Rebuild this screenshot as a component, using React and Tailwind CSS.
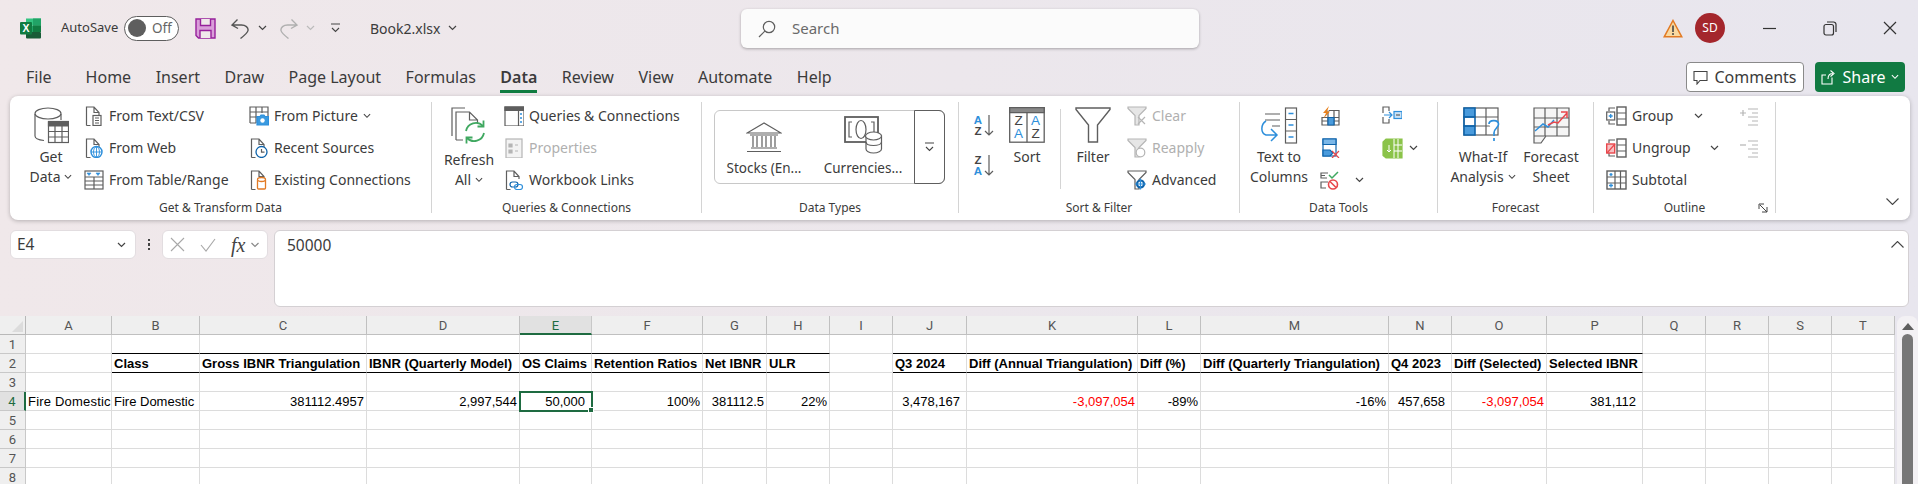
const GR = '#5e5e5e'
const LG = '#b5b5b5'
const BL = '#2e8fdb'
const DB = '#0f64ab'

const Chev = ({ color = '#444', w = 9 }) => (
  <svg width={w} height="6" viewBox="0 0 9 6" fill="none" stroke={color} strokeWidth="1.2" className="shrink-0">
    <path d="M1 1l3.5 3.5L8 1" />
  </svg>
)

const I = ({ w = 20, h = 20, children }) => (
  <svg width={w} height={h} viewBox={`0 0 ${w} ${h}`} fill="none" stroke={GR} strokeWidth="1.2" className="shrink-0">
    {children}
  </svg>
)

const Doc = ({ color = GR }) => <path d="M2.5 19.5V1h7.5l5 5.5V9M10 1v5.5h5M2.5 19.5h4" stroke={color} />

/* title bar */
const ExcelLogo = () => (
  <svg width="21" height="21" viewBox="0 0 21 21" className="shrink-0">
    <rect x="6" y="0.5" width="15" height="7" fill="#33c481" />
    <rect x="13" y="0.5" width="8" height="7" fill="#21a366" />
    <rect x="6" y="7.5" width="15" height="6.5" fill="#21a366" />
    <rect x="6" y="14" width="15" height="6.5" rx="1" fill="#185c37" />
    <rect x="13" y="7.5" width="8" height="6.5" fill="#107c41" />
    <rect x="0" y="4" width="12" height="12.5" rx="1" fill="#107c41" />
    <text x="6" y="14" textAnchor="middle" fontSize="10.5" fontWeight="700" fontFamily="Liberation Sans" fill="#fff">X</text>
  </svg>
)

const SaveIcon = () => (
  <svg width="21" height="21" viewBox="0 0 21 21" className="shrink-0" fill="#d99ed9" stroke="#96209b" strokeWidth="1.4">
    <path d="M1 1h19v19H3.5L1 17.5z" />
    <path d="M5.5 1v6.5h10V1" fill="#f0e8ea" />
    <path d="M5 20v-7.5h11V20" fill="#f0e8ea" />
  </svg>
)

const UndoIcon = ({ color }) => (
  <svg width="21" height="21" viewBox="0 0 21 21" fill="none" stroke={color} strokeWidth="1.4" className="shrink-0">
    <path d="M7.5 1.5L2 7l6 3.5M2.5 7h9c4 0 7 2.5 6.5 5.5-.3 2-3 4.5-7.5 8" />
  </svg>
)

const TitleBar = () => (
  <div className="h-[56px] flex items-center text-[#3b3b3b] relative">
    <div className="ml-[20px]"><ExcelLogo /></div>
    <span className="ml-[20px] text-[13px] w-[63px]">AutoSave</span>
    <div className="w-[55px] h-[25px] rounded-full border border-[#5e5e5e] bg-white flex items-center pl-[3px] gap-[6px]">
      <div className="w-[18px] h-[18px] rounded-full bg-[#5e5e5e]" />
      <span className="text-[13.5px] text-[#666]">Off</span>
    </div>
    <div className="ml-[16px]"><SaveIcon /></div>
    <div className="ml-[14px]"><UndoIcon color="#555" /></div>
    <div className="ml-[7px]"><Chev /></div>
    <div className="ml-[11px] scale-x-[-1]"><UndoIcon color="#b0b0b0" /></div>
    <div className="ml-[7px]"><Chev color="#bbb" /></div>
    <svg width="11" height="10" viewBox="0 0 11 10" fill="none" stroke="#444" strokeWidth="1.1" className="ml-[15px]">
      <path d="M1 1h9M2 5l3.5 3.5L9 5" />
    </svg>
    <span className="ml-[29px] text-[14px]">Book2.xlsx</span>
    <div className="ml-[7px]"><Chev w={11} /></div>

    <div className="absolute left-[741px] top-[9px] w-[458px] h-[39px] bg-[#fbfbfb] rounded-md shadow-[0_1px_3px_rgba(0,0,0,0.3)] flex items-center pl-[17px]">
      <svg width="18" height="18" viewBox="0 0 18 18" fill="none" stroke="#5e5e5e" strokeWidth="1.2">
        <circle cx="11" cy="7" r="5.7" />
        <path d="M6.8 11.2L1 17" />
      </svg>
      <span className="ml-[16px] text-[15px] text-[#6a6a6a]">Search</span>
    </div>

    <div className="ml-auto flex items-center">
      <svg width="20" height="19" viewBox="0 0 20 19" className="shrink-0">
        <path d="M10 1.5L18.8 17.8H1.2z" fill="#f9d9a0" stroke="#e27a24" strokeWidth="1.5" />
        <path d="M10 6.5v6.5" stroke="#444" strokeWidth="1.6" />
        <circle cx="10" cy="15" r="1" fill="#444" />
      </svg>
      <div className="ml-[12px] w-[30px] h-[30px] rounded-full bg-[#a4262c] text-white text-[12px] flex items-center justify-center">SD</div>
      <svg width="13" height="13" viewBox="0 0 13 13" stroke="#333" strokeWidth="1.2" className="ml-[38px]">
        <path d="M0 6.5h13" />
      </svg>
      <svg width="14" height="15" viewBox="0 0 14 15" fill="none" stroke="#333" strokeWidth="1.2" className="ml-[47px]">
        <rect x="1" y="3.5" width="9.5" height="10.5" rx="2" />
        <path d="M4 1h6.5a2.5 2.5 0 0 1 2.5 2.5V11" />
      </svg>
      <svg width="14" height="14" viewBox="0 0 14 14" stroke="#333" strokeWidth="1.2" className="ml-[46px] mr-[21px]">
        <path d="M1 1l12 12M13 1L1 13" />
      </svg>
    </div>
  </div>
)

/* tabs */
const tabs = ['Home', 'Insert', 'Draw', 'Page Layout', 'Formulas', 'Data', 'Review', 'View', 'Automate', 'Help']

const TabRow = () => (
  <div className="h-[40px] flex items-start pt-[6px] pl-[26px] text-[#3b3b3b]">
    <span className="text-[16px] h-[31px] leading-[31px] mr-[34px]">File</span>
    <div className="flex gap-[24.5px]">
      {tabs.map((t) => (
        <span
          key={t}
          className={
            t === 'Data'
              ? 'text-[16px] h-[31px] leading-[31px] font-semibold border-b-[3px] border-[#107c41] box-border'
              : 'text-[16px] h-[31px] leading-[31px]'
          }
        >
          {t}
        </span>
      ))}
    </div>
    <div className="ml-auto flex gap-[11px] mr-[13px]">
      <div className="w-[118px] h-[30px] bg-white border border-[#8a8a8a] rounded flex items-center justify-center gap-[6px] text-[16px]">
        <svg width="15" height="15" viewBox="0 0 15 15" fill="none" stroke="#444" strokeWidth="1.1">
          <path d="M1 1.5h13v9H7L4 14v-3.5H1z" />
        </svg>
        Comments
      </div>
      <div className="w-[90px] h-[30px] bg-[#117a42] rounded text-white flex items-center justify-center gap-[6px] text-[16px]">
        <svg width="16" height="16" viewBox="0 0 16 16" fill="none" stroke="#fff" strokeWidth="1.1">
          <path d="M11 8.5V15H1V6h4M7 10c0-4 2-5.5 5-5.5M9.5 1.5l3.5 3-3.5 3" />
        </svg>
        Share
        <Chev color="#fff" w={8} />
      </div>
    </div>
  </div>
)

/* ribbon icons */
const Db = () => (
  <I w={35} h={37}>
    <path d="M1 7v22c0 2.5 4 4 9 4.5M27 7v6" />
    <ellipse cx="14" cy="6.5" rx="13" ry="5.5" />
    <rect x="14.5" y="14.5" width="20" height="21" fill="#fff" />
    <path d="M14.5 15h20v4h-20z" fill={GR} />
    <path d="M21 19v16M28 19v16M15 24.5h19M15 30h19" />
  </I>
)
const FromText = () => (
  <I>
    <Doc />
    <rect x="9" y="9.5" width="8" height="10" fill="#fff" />
    <path d="M11 12h4M11 14.5h4M11 17h4" />
  </I>
)
const FromWeb = () => (
  <I>
    <Doc />
    <circle cx="12.5" cy="14" r="5.5" fill="#fff" stroke={BL} strokeWidth="1.4" />
    <path d="M7 14h11M12.5 8.5v11M9.5 14c0-3 1.5-5 3-5.5 1.5.5 3 2.5 3 5.5s-1.500 5-3 5.500c-1.500-.5-3-2.500-3-5.500z" stroke={BL} strokeWidth="0.9" />
  </I>
)
const FromTable = () => (
  <I>
    <rect x="1" y="1" width="18" height="18" fill="#fff" />
    <path d="M1 7h18M1 11h18M1 15h18M10 7v12" />
    <path d="M3 3h4L5 5.500zM12 3h4l-2 2.500z" fill={BL} stroke={BL} strokeWidth="0.6" />
  </I>
)
const FromPicture = () => (
  <I>
    <path d="M1 17V1h18v9M1 6h18M7 1v16M13 1v6M1 11h9M1 17h6" />
    <path d="M8 10.500h3l1-1.500h3l1 1.500h3.500V19H8z" fill="#3a9ae0" stroke={BL} />
    <circle cx="13.500" cy="14.500" r="2.200" fill="#fff" stroke="none" />
  </I>
)
const Recent = () => (
  <I>
    <Doc />
    <circle cx="12.500" cy="14" r="5.500" fill="#fff" stroke={DB} strokeWidth="1.300" />
    <path d="M12.500 11v3.200h3" stroke={GR} />
  </I>
)
const Existing = () => (
  <I>
    <Doc />
    <path d="M8.500 10v8a1 1 0 0 0 1 1h6a1 1 0 0 0 1-1v-8" fill="#fff" stroke="#e27a24" strokeWidth="1.300" />
    <ellipse cx="12.500" cy="9.500" rx="4" ry="2" fill="#fff" stroke="#e27a24" strokeWidth="1.300" />
  </I>
)
const RefreshIcon = () => (
  <I w={36} h={38}>
    <path d="M1 29V1h13" />
    <path d="M5 33V5h13.500l8 8v4M18.500 5v8h8M5 33h7" fill="#fff" />
    <path d="M15 24a10 10 0 0 1 17-5M33 26a10 10 0 0 1-17 5" stroke="#3fa860" strokeWidth="1.800" />
    <path d="M32.500 13.500v6h-6M15.500 36.500v-6h6" stroke="#3fa860" strokeWidth="1.800" />
  </I>
)
const QueriesIcon = () => (
  <I>
    <rect x="1" y="1" width="19" height="19" />
    <path d="M1 1h19v3.500H1z" fill={GR} />
    <path d="M14.500 4.500V20" />
    <path d="M17 7v2M17 11v2M17 15v2" stroke={BL} strokeWidth="1.500" />
  </I>
)
const PropsIcon = () => (
  <I>
    <rect x="2" y="1" width="16" height="19" stroke={LG} fill="#f3f3f3" />
    <path d="M5 6h3v3H5zM5 12h3v3H5z" fill={LG} stroke={LG} />
    <path d="M11 7h3M11 13h3" stroke={LG} />
  </I>
)
const LinksIcon = () => (
  <I>
    <Doc />
    <rect x="6" y="12" width="8" height="5" rx="2.500" fill="#fff" stroke={DB} strokeWidth="1.200" />
    <rect x="10.500" y="14.500" width="8" height="5" rx="2.500" fill="none" stroke={BL} strokeWidth="1.200" />
  </I>
)
const Bank = () => (
  <I w={36} h={31}>
    <path d="M18 1L1 11h34z" />
    <path d="M4 13h28M5 26h26M1 29.500h34" />
    <path d="M7 14v11M11 14v11M16 14v11M20 14v11M25 14v11M29 14v11" />
  </I>
)
const Money = () => (
  <I w={39} h={38}>
    <rect x="1" y="1" width="33" height="25" strokeWidth="1.800" />
    <path d="M8 6H5v15h3M27 6h3v15h-3" />
    <ellipse cx="17" cy="13.500" rx="5" ry="9" />
    <path d="M22 20v13c0 2 3 4 7.500 4s8-2 8-4V20z" fill="#fff" />
    <ellipse cx="29.500" cy="20" rx="8" ry="4" fill="#fff" />
    <path d="M22 26c0 2 3 3.500 7.500 3.500s8-1.500 8-3.500" />
  </I>
)
const SortLetters = ({ a, b }) => (
  <svg width="22" height="23" viewBox="0 0 22 23" className="shrink-0" fill="none" stroke={GR} strokeWidth="1.200">
    <text x="5" y="10" textAnchor="middle" fontSize="11.500" fontWeight="700" fontFamily="Liberation Sans" stroke="none" fill={a === 'A' ? BL : '#444'}>{a}</text>
    <text x="5" y="21" textAnchor="middle" fontSize="11.500" fontWeight="700" fontFamily="Liberation Sans" stroke="none" fill={b === 'A' ? BL : '#444'}>{b}</text>
    <path d="M16 1v20M12 17l4 4 4-4" />
  </svg>
)
const SortIcon = () => (
  <svg width="36" height="36" viewBox="0 0 36 36" className="shrink-0" fill="#fff" stroke={GR} strokeWidth="1.300">
    <rect x="0.700" y="0.700" width="34.500" height="34.500" />
    <path d="M0.700 0.700h34.500v5H0.700z" fill="#888" />
    <path d="M18 5.700v29.500" />
    <g fontSize="13.500" fontFamily="Liberation Sans" stroke="none" textAnchor="middle">
      <text x="9.500" y="18" fill="#444">Z</text>
      <text x="9.500" y="31" fill={BL}>A</text>
      <text x="26.500" y="18" fill={BL}>A</text>
      <text x="26.500" y="31" fill="#444">Z</text>
    </g>
  </svg>
)
const Funnel = () => (
  <I w={36} h={36}>
    <path d="M1 1h34v1.500L22.500 18v17h-9V18L1 2.500z" strokeWidth="1.400" />
  </I>
)
const SmallFunnel = ({ color, fill }) => (
  <path d="M1 1h18v1.500l-7 7V19H8V9.500l-7-7z" stroke={color} fill={fill} />
)
const ClearIcon = () => (
  <I>
    <SmallFunnel color={LG} fill="#e6e6e6" />
    <path d="M11 11l7 7M18 11l-7 7" stroke={LG} />
  </I>
)
const ReapplyIcon = () => (
  <I>
    <SmallFunnel color={LG} fill="#e6e6e6" />
    <circle cx="13.500" cy="14.500" r="4.300" stroke={LG} fill="#fff" />
  </I>
)
const AdvancedIcon = () => (
  <I>
    <path d="M1 1h18v1.500l-7 7V19H8V9.500l-7-7z" />
    <circle cx="13.500" cy="14" r="3.500" fill="#fff" stroke={DB} strokeWidth="2.200" />
    <path d="M13.500 8.500v11M8 14h11" stroke={BL} strokeWidth="1.200" />
  </I>
)
const TextColumns = () => (
  <I w={38} h={37}>
    <path d="M5 7h15M5 13h15M12 19h8" />
    <rect x="25.500" y="1" width="11" height="35" fill="#fff" />
    <path d="M25.500 12.500h11M25.500 24h11" />
    <path d="M28.500 6.500h5M28.500 18h5M28.500 30h5" stroke={BL} strokeWidth="1.500" />
    <path d="M6 14c-5 3-6 12 0 14h10M11 22l6 6-6 6" stroke={BL} strokeWidth="1.500" />
  </I>
)
const FlashFill = () => (
  <I>
    <path d="M9 4.500h10V19H2V11" />
    <path d="M14 4.500V19M8 4.500V19M2 11.500h17M2 15h17" stroke={GR} />
    <path d="M8 11.500h6V19H8z" fill="#4a9bdc" stroke={DB} />
    <path d="M9 0L3 7h3l-2.500 5.500L10 5.500H7z" fill="#e8821e" stroke="none" />
  </I>
)
const RemoveDup = () => (
  <I>
    <rect x="3" y="1" width="13" height="17" fill="#fff" stroke={DB} />
    <path d="M3 1h13v5.500H3z" fill="#7ab7e8" stroke={DB} />
    <path d="M3 12h7l3 3-3 3H3z" fill="#4a9bdc" stroke={DB} />
    <path d="M12 13l7 7M19 13l-7 7" stroke="#e8474c" />
  </I>
)
const Validation = () => (
  <I>
    <path d="M8 3H1v5h6M1 5.500h4M8 12H1v6h5" />
    <path d="M9 5l3 3 6-6" stroke="#3fa860" strokeWidth="1.500" />
    <circle cx="13" cy="14.500" r="4.500" stroke="#e8474c" strokeWidth="1.600" fill="#fff" />
    <path d="M10 11.500l6 6" stroke="#e8474c" strokeWidth="1.600" />
  </I>
)
const Consolidate = () => (
  <I>
    <path d="M7 5V1H1v6M1 11v6h6v-4" />
    <path d="M2 9h8M7 6l3 3-3 3" stroke={BL} />
    <rect x="12" y="5.500" width="8" height="7" stroke={BL} fill="#c9e2f6" />
    <path d="M14 9h4" stroke={GR} />
  </I>
)
const DataModel = () => (
  <I w={21} h={21}>
    <path d="M4 1h16v19H4l-3-2.500V4z" fill="#8bc34a" stroke="#8bc34a" />
    <path d="M12 1v19M16 1v19M12 7h8M12 13h8" stroke="#fff" strokeWidth="1" />
    <path d="M7 7v7M5 12l2 2 2-2" stroke="#fff" strokeWidth="1" />
  </I>
)
const WhatIf = () => (
  <I w={40} h={34}>
    <rect x="1" y="1" width="34" height="27" fill="#fff" />
    <path d="M1 1h11v9H1zM1 19h11v9H1z" fill="#4a9bdc" stroke={DB} strokeWidth="1.600" />
    <path d="M1 10h11v9H1z" stroke={DB} strokeWidth="1.600" />
    <path d="M12 10h23M12 19h23M23 1v27" />
    <path d="M26 17c0-4 9-5 9.500 0 .3 4-4.500 4-4.500 9v3M31 31v3" stroke={BL} strokeWidth="1.700" fill="#fff" />
  </I>
)
const ForecastIcon = () => (
  <I w={37} h={37}>
    <path d="M1 1h35v28H13l-5 7H1z" fill="#f5f5f5" />
    <path d="M1 11h35M1 20h35M12 1v28M24 1v28M1 29h12" />
    <path d="M2 24l8-7 5 3 6-7" stroke={BL} strokeWidth="1.500" />
    <path d="M15 18l6-3 4 1 9-10M28 5h6v6" stroke="#e8474c" strokeWidth="1.500" />
  </I>
)
const GroupIcon = ({ red }) => (
  <I w={21} h={20}>
    <path d="M9 2H3v3M3 15v3h6" />
    {red ? (
      <g>
        <rect x="0.700" y="6" width="8" height="9" fill="#f7c0c3" stroke="#e8474c" strokeWidth="1.400" />
        <path d="M1 15l8-9" stroke="#e8474c" />
      </g>
    ) : (
      <g>
        <rect x="0.700" y="6" width="8" height="8" fill="#fff" />
        <path d="M4.700 8v4M2.700 10h4" stroke={BL} strokeWidth="1.300" />
      </g>
    )}
    <rect x="11" y="1" width="9" height="18" fill="#fff" strokeWidth="1.400" />
    <path d="M11 7h9M11 13h9" />
  </I>
)
const SubtotalIcon = () => (
  <I w={21} h={20}>
    <rect x="1" y="1" width="19" height="18" strokeWidth="1.400" />
    <path d="M9 1v18M14.500 1v18M1 7h19M1 13h19" />
    <path d="M5 3v3M3.500 4.500h3M5 13.500v4M3 15.500h4" stroke={BL} strokeWidth="1.300" />
  </I>
)
const OutlinePlus = ({ plus }) => (
  <I>
    <path d="M9 3h10M13 7h6M9 11h10M13 15h6M9 19h10" stroke={LG} />
    <path d={plus ? 'M1 7h6M4 4v6' : 'M1 7h6'} stroke={LG} />
  </I>
)

/* ribbon parts */
const Sep = () => <div className="w-px self-start h-[111px] mt-[2px] bg-[#d4d4d4] shrink-0" />

const Group = ({ w, label, children }) => (
  <div className={`${w} shrink-0 flex flex-col`}>
    <div className="h-[96px] flex">{children}</div>
    <div className="h-[24px] text-[12px] leading-[24px] text-center text-[#3b3b3b]">{label}</div>
  </div>
)

const Large = ({ w, icon, a, b, chev, gap = 'mt-[4px]' }) => (
  <div className={`${w} shrink-0 flex flex-col items-center pt-[7px] text-[14px] leading-[20px] text-[#3b3b3b]`}>
    <div className="h-[36px] flex items-start">{icon}</div>
    <div className={`${gap} whitespace-nowrap`}>{a}</div>
    {b && (
      <div className="flex items-center gap-[4px] whitespace-nowrap">
        {b}
        {chev && <Chev w={8} />}
      </div>
    )}
  </div>
)

const Small = ({ icon, label, disabled, chev, className = '' }) => (
  <div className={`h-[32px] flex items-center gap-[5px] text-[14px] whitespace-nowrap ${disabled ? 'text-[#b0b0b0]' : 'text-[#3b3b3b]'} ${className}`}>
    {icon}
    {label && <span className="mb-[2px]">{label}</span>}
    {chev}
  </div>
)

const Ribbon = () => (
  <div className="mx-[8px] ml-[10px] h-[124px] bg-white rounded-lg shadow-[0_1px_4px_rgba(0,0,0,0.25)] pt-[4px] flex relative">
    <Group w="w-[421px]" label="Get & Transform Data">
      <div className="ml-[14px]"><Large w="w-[54px]" icon={<Db />} a="Get" b="Data" chev /></div>
      <div className="ml-[6px] w-[165px]">
        <Small icon={<FromText />} label="From Text/CSV" />
        <Small icon={<FromWeb />} label="From Web" />
        <Small icon={<FromTable />} label="From Table/Range" />
      </div>
      <div>
        <Small icon={<FromPicture />} label="From Picture" chev={<Chev w={8} />} />
        <Small icon={<Recent />} label="Recent Sources" />
        <Small icon={<Existing />} label="Existing Connections" />
      </div>
    </Group>
    <Sep />
    <Group w="w-[269px]" label="Queries & Connections">
      <div className="ml-[7px]"><Large w="w-[60px]" icon={<RefreshIcon />} a="Refresh" b="All" chev gap="mt-[7px]" /></div>
      <div className="ml-[5px]">
        <Small icon={<QueriesIcon />} label="Queries & Connections" />
        <Small icon={<PropsIcon />} label="Properties" disabled />
        <Small icon={<LinksIcon />} label="Workbook Links" />
      </div>
    </Group>
    <Sep />
    <Group w="w-[256px]" label="Data Types">
      <div className="ml-[12px] mt-[10px] w-[231px] h-[74px] border border-[#c8c8c8] rounded-md flex text-[13.500px] text-[#3b3b3b]">
        <div className="w-[98px] flex flex-col items-center pt-[11px]">
          <div className="h-[31px]"><Bank /></div>
          <span className="mt-[6px] leading-[18px]">Stocks (En...</span>
        </div>
        <div className="w-[100px] flex flex-col items-center pt-[5px]">
          <div className="h-[37px]"><Money /></div>
          <span className="mt-[6px] leading-[18px]">Currencies...</span>
        </div>
        <div className="flex-1 ml-[1px] border border-[#5e5e5e] rounded-r-md flex items-center justify-center -my-px -mr-px">
          <svg width="11" height="10" viewBox="0 0 11 10" fill="none" stroke="#444" strokeWidth="1.100">
            <path d="M1 1h9M2 5l3.500 3.500L9 5" />
          </svg>
        </div>
      </div>
    </Group>
    <Sep />
    <Group w="w-[280px]" label="Sort & Filter">
      <div className="ml-[14px] w-[22px] pt-[14px] flex flex-col gap-[17px]">
        <SortLetters a="A" b="Z" />
        <SortLetters a="Z" b="A" />
      </div>
      <div className="ml-[12px]"><Large w="w-[40px]" icon={<SortIcon />} a="Sort" /></div>
      <div className="w-px h-[80px] mt-[9px] ml-[13px] bg-[#d4d4d4]" />
      <div className="ml-[12px]"><Large w="w-[40px]" icon={<Funnel />} a="Filter" /></div>
      <div className="ml-[14px]">
        <Small icon={<ClearIcon />} label="Clear" disabled />
        <Small icon={<ReapplyIcon />} label="Reapply" disabled />
        <Small icon={<AdvancedIcon />} label="Advanced" />
      </div>
    </Group>
    <Sep />
    <Group w="w-[197px]" label="Data Tools">
      <div className="ml-[7px]"><Large w="w-[64px]" icon={<TextColumns />} a="Text to" b="Columns" /></div>
      <div className="ml-[9px] w-[62px]">
        <Small icon={<FlashFill />} label="" />
        <Small icon={<RemoveDup />} label="" />
        <Small icon={<Validation />} label="" chev={<div className="ml-[10px]"><Chev /></div>} />
      </div>
      <div>
        <Small icon={<Consolidate />} label="" />
        <Small icon={<DataModel />} label="" chev={<div className="ml-[1px]"><Chev /></div>} />
      </div>
    </Group>
    <Sep />
    <Group w="w-[155px]" label="Forecast">
      <div className="ml-[7px]"><Large w="w-[76px]" icon={<WhatIf />} a="What-If" b="Analysis" chev gap="mt-[4px]" /></div>
      <Large w="w-[60px]" icon={<ForecastIcon />} a="Forecast" b="Sheet" />
    </Group>
    <Sep />
    <Group w="w-[181px]" label="Outline">
      <div className="ml-[12px] w-[133px]">
        <Small icon={<GroupIcon />} label="Group" chev={<div className="ml-[16px]"><Chev /></div>} />
        <Small icon={<GroupIcon red />} label="Ungroup" chev={<div className="ml-[14px]"><Chev /></div>} />
        <Small icon={<SubtotalIcon />} label="Subtotal" />
      </div>
      <div>
        <Small icon={<OutlinePlus plus />} label="" />
        <Small icon={<OutlinePlus />} label="" />
      </div>
    </Group>
    <Sep />
    <svg width="10" height="10" viewBox="0 0 10 10" fill="none" stroke="#444" strokeWidth="1" className="absolute left-[1748px] bottom-[7px]">
      <path d="M1 1h5M1 1v5M2 2l7 7M9 4v5H4" />
    </svg>
    <svg width="13" height="7" viewBox="0 0 13 7" fill="none" stroke="#444" strokeWidth="1.100" className="absolute right-[11px] bottom-[15px]">
      <path d="M.5.500l6 6 6-6" />
    </svg>
  </div>
)

/* formula bar */
const FormulaBar = () => (
  <div className="mt-[10px] h-[77px] pl-[10px] pr-[9px] flex items-start text-[15.5px] text-[#3b3b3b]">
    <div className="w-[126px] h-[29px] bg-white rounded-md border border-[#e2dde0] flex items-center justify-between pl-[6px] pr-[7px]">
      <span>E4</span>
      <Chev w={13} />
    </div>
    <div className="w-[26px] h-[29px] flex flex-col items-center justify-center gap-[2px]">
      <div className="w-[2.500px] h-[2.500px] bg-[#444]" />
      <div className="w-[2.500px] h-[2.500px] bg-[#444]" />
      <div className="w-[2.500px] h-[2.500px] bg-[#444]" />
    </div>
    <div className="w-[106px] h-[29px] bg-white rounded-md border border-[#e2dde0] flex items-center pl-[7px]">
      <svg width="15" height="15" viewBox="0 0 15 15" stroke="#a8a8a8" strokeWidth="1.100"><path d="M1 1l13 13M14 1L1 14" /></svg>
      <svg width="16" height="14" viewBox="0 0 16 14" fill="none" stroke="#a8a8a8" strokeWidth="1.100" className="ml-[15px]"><path d="M1 7l5 6L15 1" /></svg>
      <span className="ml-[15px] text-[20px] italic text-[#444]" style={{ fontFamily: 'Liberation Serif' }}>fx</span>
      <div className="ml-[5px]"><Chev color="#888" w={10} /></div>
    </div>
    <div className="ml-[6px] flex-1 h-[77px] bg-white rounded-md border border-[#d4d0d3] pl-[12px] pt-[3px] relative">
      <span>50000</span>
      <svg width="13" height="7" viewBox="0 0 13 7" fill="none" stroke="#444" strokeWidth="1.100" className="absolute right-[4px] top-[10px]">
        <path d="M.5 6.500l6-6 6 6" />
      </svg>
    </div>
  </div>
)

/* sheet */
const cols = ['A', 'B', 'C', 'D', 'E', 'F', 'G', 'H', 'I', 'J', 'K', 'L', 'M', 'N', 'O', 'P', 'Q', 'R', 'S', 'T']
const headerRow = { B: 'Class', C: 'Gross IBNR Triangulation', D: 'IBNR (Quarterly Model)', E: 'OS Claims', F: 'Retention Ratios', G: 'Net IBNR', H: 'ULR', J: 'Q3 2024', K: 'Diff (Annual Triangulation)', L: 'Diff (%)', M: 'Diff (Quarterly Triangulation)', N: 'Q4 2023', O: 'Diff (Selected)', P: 'Selected IBNR' }
const dataRow = {
  A: { t: 'Fire Domestic', tr: 'tracking-[0.2px]' },
  B: { t: 'Fire Domestic' },
  C: { t: '381112.4957', r: 1 },
  D: { t: '2,997,544', r: 1, pr: 'pr-[2px]' },
  E: { t: '50,000', r: 1, pr: 'pr-[6px]' },
  F: { t: '100%', r: 1 },
  G: { t: '381112.5', r: 1 },
  H: { t: '22%', r: 1 },
  J: { t: '3,478,167', r: 1, pr: 'pr-[6px]' },
  K: { t: '-3,097,054', r: 1, red: 1 },
  L: { t: '-89%', r: 1 },
  M: { t: '-16%', r: 1 },
  N: { t: '457,658', r: 1, pr: 'pr-[6px]' },
  O: { t: '-3,097,054', r: 1, red: 1 },
  P: { t: '381,112', r: 1, pr: 'pr-[6px]' },
}
const ruled = 'BCDEFGHJKLMNOP'

const cellBase = 'h-[19px] border-r border-b border-[#dcdcdc] px-[2px] leading-[20px] whitespace-nowrap overflow-hidden'

const Sheet = () => (
  <div className="mt-[9px] flex">
    <div
      className="grid grid-cols-[26px_86px_88px_167px_153px_72px_111px_64px_63px_63px_74px_171px_63px_188px_63px_95px_96px_63px_63px_63px_63px] text-[13px] text-black bg-white"
      style={{ fontFamily: 'Liberation Sans' }}
    >
      <div className="h-[19px] bg-[#efefef] border-r border-b border-[#b8b8b8] flex items-end justify-end p-[2px]">
        <div className="w-0 h-0 border-l-[11px] border-l-transparent border-b-[11px] border-b-[#dcdcdc]" />
      </div>
      {cols.map((c) => (
        <div
          key={c}
          className={
            c === 'E'
              ? 'h-[19px] bg-[#e1e1e1] border-r border-[#c8c8c8] border-b-2 border-b-[#1e6b41] text-[#1e6b41] text-center text-[13px] leading-[20px]'
              : 'h-[19px] bg-[#efefef] border-r border-b border-[#c0c0c0] text-[#555] text-center text-[13px] leading-[20px]'
          }
          style={{ fontFamily: 'Roboto' }}
        >
          {c}
        </div>
      ))}

      {[1, 2, 3, 4, 5, 6, 7, 8].map((row) => (
        <Row key={row} row={row} />
      ))}
    </div>
    <div className="ml-[2px] flex-1 h-[168px] bg-[#f3f1f4] rounded-t-lg flex flex-col items-center pt-[7px]">
      <div className="w-0 h-0 border-x-[6px] border-x-transparent border-b-[7px] border-b-[#5e5e5e]" />
      <div className="mt-[4px] w-[11px] flex-1 bg-[#777] rounded-t-full" />
    </div>
  </div>
)

const Row = ({ row }) => (
  <>
    <div
      className={
        row === 4
          ? 'h-[19px] bg-[#e1e1e1] border-r-2 border-r-[#1e6b41] border-b border-b-[#c8c8c8] text-[#1e6b41] text-center leading-[20px]'
          : 'h-[19px] bg-[#efefef] border-r border-b border-[#c8c8c8] text-[#555] text-center leading-[20px]'
      }
      style={{ fontFamily: 'Roboto' }}
    >
      {row}
    </div>
    {cols.map((c) => {
      const isRuled = ruled.includes(c)
      const borderB = (row === 1 || row === 2) && isRuled ? 'border-b-black' : ''
      if (row === 2) {
        return (
          <div key={c} className={`${cellBase} ${borderB} font-bold`}>
            {headerRow[c]}
          </div>
        )
      }
      if (row === 4) {
        const d = dataRow[c] || {}
        const selected = c === 'E'
        return (
          <div
            key={c}
            className={`${cellBase} ${d.r ? 'text-right' : ''} ${d.pr || ''} ${d.tr || ''} ${d.red ? 'text-[#ff0000]' : ''} ${selected ? 'relative overflow-visible outline-2 -outline-offset-1 outline-[#1e6b41]' : ''}`}
          >
            {d.t}
            {selected && <div className="absolute -right-[3px] -bottom-[3px] w-[6px] h-[6px] bg-[#1e6b41] border border-white" />}
          </div>
        )
      }
      return <div key={c} className={`${cellBase} ${borderB}`} />
    })}
  </>
)

export default function App() {
  return (
    <div
      className="w-[1918px] h-[484px] overflow-hidden bg-linear-to-r from-[#f0e8ea] to-[#e8e6ee]"
      style={{ fontFamily: '"Noto Sans", sans-serif' }}
    >
      <TitleBar />
      <TabRow />
      <Ribbon />
      <FormulaBar />
      <Sheet />
    </div>
  )
}
